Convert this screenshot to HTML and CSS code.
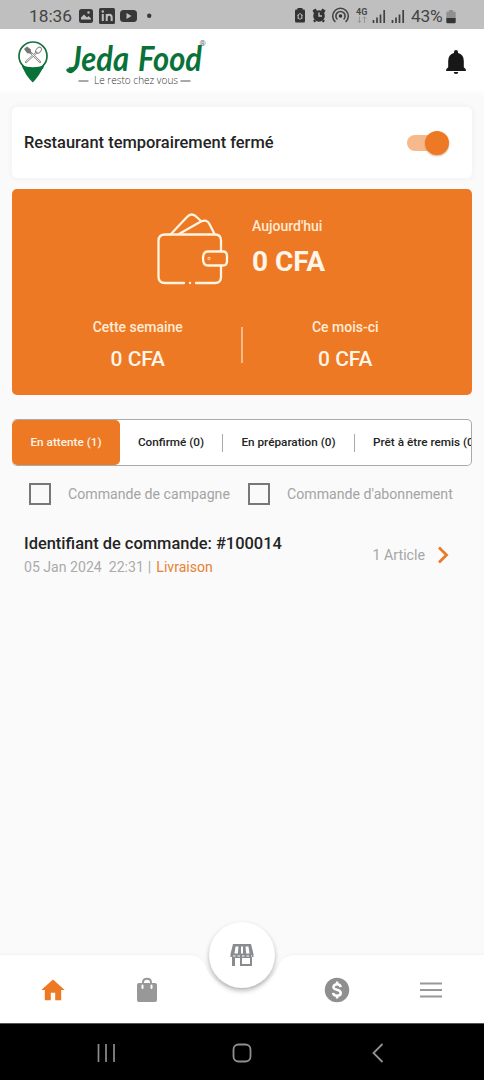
FILE: index.html
```html
<!DOCTYPE html>
<html lang="fr">
<head>
<meta charset="utf-8">
<meta name="viewport" content="width=device-width">
<title>Jeda Food</title>
<link rel="stylesheet" href="styles.css">
</head>
<body>
<div class="screen">
  <div class="status">
    <span class="clock">18:36</span>
    <svg class="status-left" width="76" height="18" viewBox="0 0 76 18">
      <g fill="#383838">
        <rect x="1" y="2" width="14" height="14" rx="2.5"/>
        <rect x="21" y="1" width="16" height="16" rx="1.5"/>
        <rect x="42" y="3" width="17" height="12" rx="3.5"/>
        <circle cx="71.200" cy="8.800" r="2.200"/>
      </g>
      <path d="M3 12.500v-2l3-3 3 3 1.500-1.500 2.500 2.500v1z" fill="#bfbfbf"/><circle cx="10.500" cy="5.500" r="1.200" fill="#bfbfbf"/>
      <path d="M24.800 7v7M28.700 14V7M28.700 10.500q0-2.700 2.500-2.700t2.500 2.700V14" stroke="#bfbfbf" stroke-width="2" fill="none"/><circle cx="24.800" cy="4.500" r="1.200" fill="#bfbfbf"/>
      <path d="M48.500 6l5 3-5 3z" fill="#bfbfbf"/>
    </svg>
    <svg class="status-right" width="116" height="20" viewBox="0 0 116 20">
      <g fill="#333">
        <path d="M3.500 3.500V2h5v1.500h1.200a1.300 1.300 0 0 1 1.300 1.300v10.400a1.300 1.300 0 0 1-1.300 1.300H2.300A1.300 1.300 0 0 1 1 15.200V4.800a1.300 1.300 0 0 1 1.300-1.300z"/>
        <circle cx="25" cy="10" r="5.800"/>
        <path d="M18.500 4.500l3-2 1.500 2-3 3zM31.500 4.500l-3-2-1.500 2 3 3zM19 14.500l2-1 1 2-1.500 1zM31 14.500l-2-1-1 2 1.500 1z"/>
        <circle cx="46.500" cy="10" r="1.800"/>
      </g>
      <path d="M3.500 10L6 7.300 8.500 10M4 11.500l2 2 2-2M4.200 8.500v4.500M7.800 8.500v4.500" stroke="#bfbfbf" stroke-width="1" fill="none"/>
      <path d="M25 6.500V10h3" stroke="#bfbfbf" stroke-width="1.400" fill="none"/>
      <path d="M43.400 13.500a4.600 4.600 0 1 1 6.200 0M41.400 16a7.800 7.800 0 1 1 10.200 0" stroke="#444" stroke-width="1.600" fill="none"/>
      <text x="62" y="8.500" class="net">4G</text>
      <path d="M65.500 10.500v6M63.700 14.800l1.800 2 1.800-2M70.500 17v-6M68.700 12.700l1.800-2 1.800 2" stroke="#969696" stroke-width="1" fill="none"/>
      <path d="M79.500 17v-3M83 17v-5.500M86.500 17V8.500M90.200 17V4M98.500 17v-3M102 17v-5.500M105.500 17V8.500M109.200 17V4" stroke="#414141" stroke-width="1.700"/>
    </svg>
    <span class="percent">43%</span>
    <svg class="battery" width="10" height="15" viewBox="0 0 10 15"><path d="M3 1h4v1.500h1.500A1.200 1.200 0 0 1 9.700 3.700V9H.3V3.700a1.200 1.200 0 0 1 1.200-1.200H3z" fill="#909090"/><path d="M.3 9h9.400v4a1.200 1.200 0 0 1-1.200 1.200h-7A1.200 1.200 0 0 1 .3 13z" fill="#343434"/></svg>
  </div>

  <header class="header">
    <svg class="logo" width="195" height="54" viewBox="0 0 195 54">
      <circle cx="15" cy="16" r="14" fill="#fff" stroke="#176f3d" stroke-width="1.700"/>
      <path d="M4 25.500Q9 27.200 15 27.200T26 25.500Q22 35 14.800 42.500Q7 35 4 25.500z" fill="#087238"/>
      <path d="M3.500 23.500Q8 29.500 15 29.500T26.500 23.500L25 29H5z" fill="#087238"/>
      <g fill="none" stroke="#8b8b8b" stroke-linecap="round">
        <path d="M10.500 10.500L22 22" stroke-width="2.200"/><path d="M18.500 12.500L8 22" stroke-width="2.200"/><path d="M18 13L8.500 21.500" stroke="#fff" stroke-width=".8"/><path d="M14 14L21.500 21.500" stroke="#fff" stroke-width=".8"/>
        <ellipse cx="20.500" cy="10.300" rx="3.500" ry="2.300" transform="rotate(-48 20.500 10.300)" stroke-width="1"/>
      </g>
      <path d="M6 9l3-2.500 4 3-.3 4-3.500-.2z" fill="#777"/>
      <g class="wordmark"><text x="51" y="31" textLength="60" lengthAdjust="spacingAndGlyphs">Jeda</text><text x="120" y="31" textLength="64" lengthAdjust="spacingAndGlyphs">Food</text></g>
      <path d="M56 29q-3 4.500-6 1" fill="none" stroke="#087238" stroke-width="3.500" stroke-linecap="round"/>
      <text class="registered" x="181.500" y="6">®</text>
      <text class="tagline" x="76" y="43.500" textLength="84" lengthAdjust="spacing">Le resto chez vous</text>
      <path d="M60.500 41h10M162.500 41h10" stroke="#555"/>
    </svg>
    <svg class="bell" width="20" height="24" viewBox="0 0 20 24"><path d="M10 0a2 2 0 0 1 2 2v1q5.800 1.500 5.800 8v6.300l2 2V21H.2v-1.700l2-2V11Q2.200 4.500 8 3V2a2 2 0 0 1 2-2zM7.700 22h4.600a2.300 2 0 0 1-4.600 0z" fill="#171717"/></svg>
  </header>

  <main class="content">
    <section class="closed-card">
      <span class="closed-label">Restaurant temporairement fermé</span>
      <span class="switch"><span class="thumb"></span></span>
    </section>

    <section class="earnings">
      <div class="today">
        <svg width="72" height="72" viewBox="0 0 72 72" fill="none" stroke="#fff4df" stroke-width="2.300" stroke-linecap="round" stroke-linejoin="round">
          <path d="M27 70H8q-6.500 0-6.500-6.500V28q0-6.500 6.500-6.500h50q6 0 6 6V38M64 53v11q0 6-6 6H39M33 70h.1"/>
          <path d="M51 38.500h15q4 0 4 4.500v5q0 4.500-4 4.500H51q-5 0-5-7t5-7z"/>
          <path d="M14 21L30 4q4-4.500 8.500-1L44 8M22 21L43 9q7-4 10 3l4.500 9"/>
          <circle cx="52" cy="45.500" r=".3"/>
        </svg>
        <div class="today-text"><span class="label">Aujourd'hui</span><span class="today-value">0 CFA</span></div>
      </div>
      <div class="periods">
        <div class="period"><span class="label">Cette semaine</span><span class="value">0 CFA</span></div>
        <span class="period-line"></span>
        <div class="period"><span class="label">Ce mois-ci</span><span class="value">0 CFA</span></div>
      </div>
    </section>

    <nav class="tabs">
      <span class="tab active">En attente (1)</span>
      <span class="tab confirmed">Confirmé (0)</span>
      <span class="tab preparing">En préparation (0)</span>
      <span class="tab ready">Prêt à être remis (0)</span>
    </nav>

    <div class="filters">
      <span class="check"></span><span class="filter first">Commande de campagne</span>
      <span class="check"></span><span class="filter">Commande d'abonnement</span>
    </div>

    <article class="order">
      <div class="order-info">
        <span class="order-title">Identifiant de commande: #100014</span>
        <span class="order-meta"><span class="date">05 Jan 2024</span><span class="time">22:31</span><span class="bar">|</span><span class="delivery">Livraison</span></span>
      </div>
      <span class="count">1 Article</span>
      <svg width="12" height="18" viewBox="0 0 12 18"><path d="M2 1.500L9.500 9 2 16.500" fill="none" stroke="#e87b2c" stroke-width="2.800"/></svg>
    </article>
  </main>

  <nav class="bottom">
    <svg class="bottom-shape" width="484" height="74" viewBox="0 0 484 74"><path d="M0 6H187C205 6 203 16 210 25Q222 40 242 40T274 25C281 16 279 6 297 6H484V74H0z" fill="#fff"/></svg>
    <div class="nav-item"><svg width="24" height="22" viewBox="0 0 24 22"><path d="M12 .5L.3 11h3.500v10.300h6v-7.600h4.400v7.600h6V11h3.500z" fill="#ee7924"/></svg></div>
    <div class="nav-item"><svg width="22" height="26" viewBox="0 0 22 26"><path d="M3 6h16q2 0 2 2v15q0 2-2 2H3q-2 0-2-2V8q0-2 2-2z" fill="#989898"/><path d="M7 7V5.500Q7 1.800 11 1.800T15 5.500V7" fill="none" stroke="#989898" stroke-width="2"/><path d="M6.500 8.500v2.500M15.500 8.500v2.500" stroke="#fff" stroke-width="2" stroke-linecap="round"/></svg></div>
    <div class="nav-gap"></div>
    <div class="nav-item"><svg width="26" height="26" viewBox="0 0 24 24"><circle cx="12" cy="12" r="11.300" fill="#8f8f8f"/><path d="M15.400 9.300Q15 6.700 12.100 6.700T8.700 9.200Q8.700 11 12 11.800t3.500 3q0 2.500-3.400 2.500t-3.700-2.700M12.100 4.200v2.300M12.100 17.500v2.300" fill="none" stroke="#fff" stroke-width="2.300"/></svg></div>
    <div class="nav-item"><svg width="24" height="18" viewBox="0 0 24 18"><path d="M1 2.500h22M1 9h22M1 15.500h22" stroke="#989898" stroke-width="2.200"/></svg></div>
    <div class="store-button"><svg width="24" height="24" viewBox="0 0 24 24"><path d="M3 1h18l2.500 10v3H22v9H10v-8H5v8H2v-9H.5v-3z" fill="#898c8f"/><path d="M5.500 3.500h3l-.7 7H4.500zM11 3.500h2v7h-2zM15.500 3.500h3l1 7h-3.300zM12 15h8v6h-8z" fill="#fff"/><path d="M3 13h19" stroke="#fff" stroke-dasharray="2.500 2"/></svg></div>
  </nav>
  <div class="system">
    <svg width="20" height="20" viewBox="0 0 20 20"><path d="M2.500 1v18M10 1v18M18 1v18" stroke="#8d8d8d" stroke-width="1.700"/></svg>
    <svg width="20" height="20" viewBox="0 0 20 20"><rect x="1.500" y="1.500" width="17" height="17" rx="5" fill="none" stroke="#909090" stroke-width="1.800"/></svg>
    <svg width="20" height="20" viewBox="0 0 20 20"><path d="M14.500 1L5.500 10l9 9" fill="none" stroke="#929292" stroke-width="1.800"/></svg>
  </div>
</div>
</body>
</html>
```
FILE: styles.css
```css
* { box-sizing: border-box; }
body { margin: 0; background: #fafafa; font-family: Roboto, sans-serif; color: #242424; }
svg { display: block; flex: none; }
.screen { width: 484px; height: 1080px; display: flex; flex-direction: column; overflow: hidden; }
.status { height: 29px; flex: none; background: #bfbfbf; display: flex; align-items: center; padding: 3px 28px 0 29px; color: #444; white-space: nowrap; }
.clock { width: 49px; font-size: 17.300px; line-height: 20px; }
.status-right { margin-left: 140px; }
.net { font: 700 9px Roboto, sans-serif; fill: #484848; }
.percent { width: 35px; margin-left: 1px; font-size: 17.300px; line-height: 20px; letter-spacing: -.2px; }
.header { height: 67px; flex: none; background: linear-gradient(#fff 60px, #fafafa); display: flex; justify-content: space-between; padding: 11px 18px 0; }
.logo { overflow: visible; }
.bell { margin-top: 10px; }
.wordmark { font: italic 700 34px Lato, sans-serif; fill: #087238; }
.registered { font: 8px Roboto, sans-serif; fill: #666; }
.tagline { font: 300 10px "Open Sans", sans-serif; fill: #333; }
.content { flex: 1; padding: 11px 12px 0; display: flex; flex-direction: column; min-height: 0; }
.closed-card { height: 71px; flex: none; background: #fff; border-radius: 5px; box-shadow: 0 0 5px 1px #f1f1f2; display: flex; align-items: center; justify-content: space-between; padding: 0 23px 0 12px; }
.closed-label { font-size: 16.450px; font-weight: 500; white-space: nowrap; }
.switch { width: 42px; height: 24px; display: flex; align-items: center; justify-content: flex-end; position: relative; }
.switch::before { content: ""; position: absolute; left: 0; top: 4px; width: 36px; height: 16px; border-radius: 8px; background: #f7b88c; }
.thumb { position: relative; width: 24px; height: 24px; border-radius: 50%; background: #ee7924; box-shadow: 0 1px 2px #b5744899; }
.earnings { height: 206px; flex: none; margin-top: 11px; background: #ee7924; border-radius: 5px; color: #fff5e9; padding-top: 24px; }
.today { height: 72px; display: flex; gap: 23px; margin-left: 145px; }
.today-text { display: flex; flex-direction: column; padding-top: 4px; }
.label { font-size: 14px; line-height: 18px; font-weight: 500; color: #ffebd6; white-space: nowrap; }
.today-value { margin-top: 11px; font-size: 28px; line-height: 32px; font-weight: 700; }
.periods { display: flex; align-items: center; height: 54px; margin-top: 33px; }
.period { flex: 1; display: flex; flex-direction: column; align-items: center; gap: 11px; }
.period:first-child { padding-left: 23px; }
.period:last-child { padding-right: 24px; }
.period .label { margin-top: -1px; }
.value { font-size: 21px; line-height: 24px; font-weight: 500; }
.period-line { width: 2px; height: 36px; background: #f7ba87; }
.tabs { height: 47px; flex: none; margin-top: 24px; display: flex; align-items: center; overflow: hidden; border: 1px solid #aaa; border-left: 0; border-radius: 5px; background: #fff; }
.tab { flex: none; font-size: 11.750px; line-height: 16px; font-weight: 500; text-align: center; white-space: nowrap; }
.active { width: 108px; height: 45px; line-height: 45px; background: #ee7924; color: #fff3e5; border-radius: 5px; }
.confirmed, .preparing { height: 18px; border-right: 1px solid #aaa; }
.confirmed { width: 103px; }
.preparing { width: 132px; }
.ready { width: 150px; height: 18px; padding-left: 18px; text-align: left; }
.filters { display: flex; align-items: center; margin-top: 17px; height: 22px; padding-left: 17px; color: #a4a4a4; }
.check { width: 22px; height: 22px; border: 2px solid #777; flex: none; margin-right: 17px; }
.filter { font-size: 14.150px; line-height: 20px; white-space: nowrap; }
.first { width: 180px; }
.order { display: flex; align-items: center; padding: 0 23px 0 12px; height: 48px; margin-top: 26px; }
.order-info { flex: 1; display: flex; flex-direction: column; gap: 3px; margin-top: -1px; }
.order-title { font-size: 16.450px; line-height: 22px; font-weight: 500; }
.order-meta { display: flex; font-size: 14.100px; line-height: 18px; color: #aaa; }
.time { margin-left: 7px; }
.bar { margin: 0 5px 0 4px; }
.delivery { color: #e78134; }
.count { font-size: 14.200px; color: #a6a6a6; margin-right: 12px; }
.bottom { height: 74px; flex: none; position: relative; display: flex; align-items: center; padding: 7px 6px 0; }
.bottom-shape { position: absolute; left: 0; top: 0; filter: drop-shadow(0 -1px 1px #00000008); }
.nav-item { position: relative; width: 94px; display: flex; justify-content: center; }
.nav-gap { width: 96px; }
.store-button { position: absolute; left: 209px; top: -27px; width: 66px; height: 66px; border-radius: 50%; background: #fff; display: flex; align-items: center; justify-content: center; box-shadow: 0 3px 5px #0000003d, 0 1px 5px #0000000d; }
.system { height: 57px; flex: none; background: #000; display: flex; justify-content: center; align-items: center; gap: 116px; padding-top: 2px; border-top: 1px solid #555; }
```
